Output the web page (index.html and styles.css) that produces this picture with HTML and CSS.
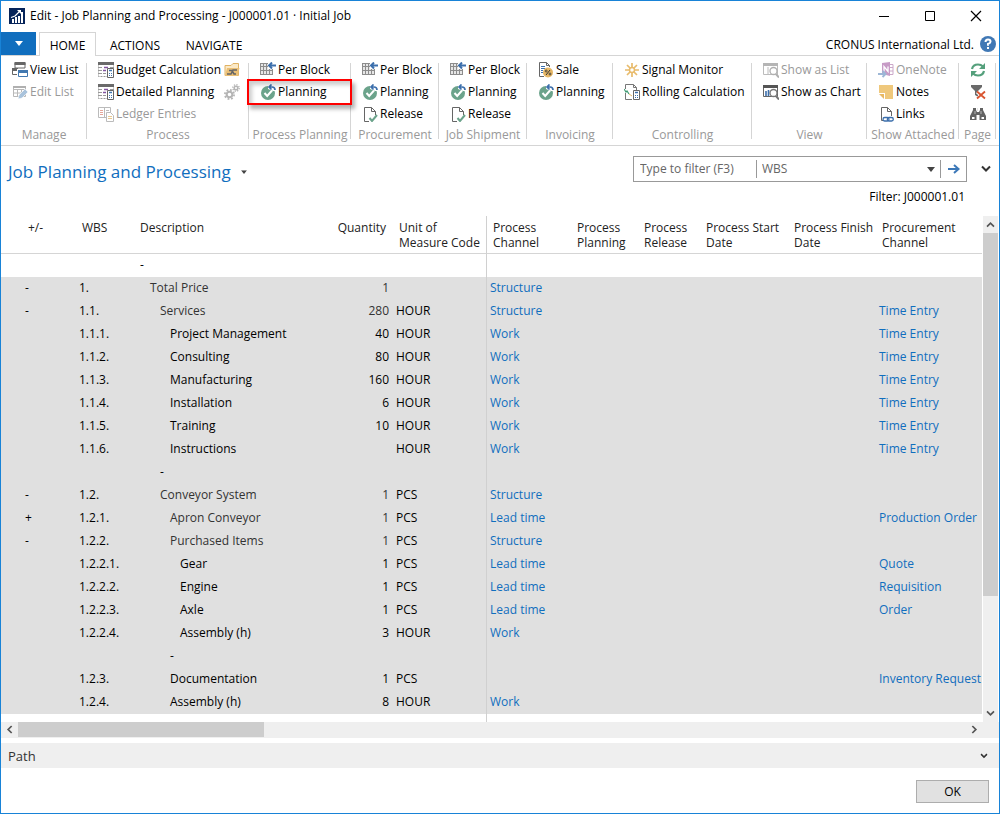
FILE: index.html
```html
<!DOCTYPE html>
<html lang="en">
<head>
<meta charset="utf-8">
<title>Edit - Job Planning and Processing</title>
<link rel="stylesheet" href="styles.css">
</head>
<body>
<svg class="defs" aria-hidden="true">
  <symbol id="i-viewlist" viewBox="0 0 16 16"><path d="M3 1h10v5H3z" fill="#fff" stroke="#666"/><path d="M2.500 0h11v3h-11z" fill="#666"/><path d="M.5 7.500h6v5h-6z" fill="#fff" stroke="#666"/><path d="M0 6h6v3H0z" fill="#666"/><path d="M5 7h11v9H5z" fill="#fff"/><path d="M6.500 9.500h9v5h-9z" fill="#fff" stroke="#4278b0"/><path d="M6 8h10v3H6z" fill="#4278b0"/></symbol>
  <symbol id="i-editlist" viewBox="0 0 16 16"><path d="M1.500 2.500h12v10h-12zM1.500 5.500h12M1.500 9h12M5.500 5v8M9.500 5v8" fill="none" stroke="#b8b8b8"/><path d="M1 2h13v2H1z" fill="#b0b0b0"/><path d="M6 15l1-4 6-6 3 3-6 6z" fill="#a9c3dc" stroke="#fff" stroke-width=".6"/></symbol>
  <symbol id="i-calc" viewBox="0 0 16 16"><path d="M.5 1.500h15v13H.5z" fill="#fff" stroke="#999" stroke-dasharray="2 1"/><path d="M0 0h16v3H0z" fill="#6a6a6a"/><path d="M1 5.500h3M1 8.500h3M1 11.500h3" stroke="#999"/><path d="M6 5.500h4M5 8.500h3" stroke="#8254a0" stroke-width="1.500"/><path d="M12 5.500h3M5 11.500h3" stroke="#999"/><path d="M9.500 6.500h6v9h-6z" fill="#fff" stroke="#666"/><path d="M11 8.500h3" stroke="#4278b0" stroke-width="1.500"/><path d="M11 11.500h3M11 13.500h3" stroke="#4278b0" stroke-dasharray="1 1"/></symbol>
  <symbol id="i-ledger" viewBox="0 0 16 16"><path d="M.5 1.500h12v10H.5zM6.500 1.500v10" fill="#fff" stroke="#bbb"/><path d="M2 4.500h3M2 6.500h3M2 8.500h3" stroke="#e5a69a"/><path d="M8 4.500h3" stroke="#bbb"/><path d="M8.500 6.500h4l3 3v6h-7z" fill="#fff" stroke="#bbb"/><path d="M10 10.500h4M10 12.500h4" stroke="#e9c98f"/></symbol>
  <symbol id="i-folder" viewBox="0 0 16 16"><path d="M1 13.500v-10h6l2-2h5.500v12z" fill="#fbe9c6" stroke="#e0b263"/><path d="M1 14l2-8h12.500l-2 8z" fill="#eabf75"/><path d="M3 12h4l2-4h4M5 8.500h3l2 3.500h2" fill="none" stroke="#666" stroke-width="1.600"/></symbol>
  <symbol id="i-gears" viewBox="0 0 16 16"><g fill="none" stroke="#b5b5b5"><circle cx="5.500" cy="10.500" r="2.800" stroke-width="2"/><circle cx="5.500" cy="10.500" r="4.600" stroke-width="1.800" stroke-dasharray="1.800 1.810"/><circle cx="12" cy="4" r="1.800" stroke-width="1.500"/><circle cx="12" cy="4" r="3.200" stroke-width="1.400" stroke-dasharray="1.250 1.260"/></g></symbol>
  <symbol id="i-block" viewBox="0 0 16 16"><path d="M.5 1.500h12v11H.5z" fill="#e6e6e6"/><path d="M.5 1v12M3.500 1v12M6.500 1v12M9.500 1v12M12.500 1v12M0 1.500h13M0 4.500h13M0 8.500h13M0 12.500h13" stroke="#8c8c8c"/><path d="M8 0h8v7H8z" fill="#fff"/><path d="M9 3.500h7M12 .5l-3 3 3 3" fill="none" stroke="#3c6fac" stroke-width="2"/></symbol>
  <symbol id="i-plan" viewBox="0 0 16 16"><circle cx="8" cy="9" r="7" fill="#6ba38b"/><path d="M4.500 9l2.700 3L12 6.500" fill="none" stroke="#fff" stroke-width="2"/><path d="M8 0h8v7h-3L8 5z" fill="#fff"/><path d="M9 3h3q3 0 3 3M11.500.5L9 3l2.500 2.500" fill="none" stroke="#3c6fac" stroke-width="1.700"/></symbol>
  <symbol id="i-release" viewBox="0 0 16 16"><path d="M7 15.500H2.500V1.500h7l4 4V9M9.500 1.500v4h4" fill="#fff" stroke="#666"/><path d="M7.500 12l2.500 3 5-6" fill="none" stroke="#6ba38b" stroke-width="2"/></symbol>
  <symbol id="i-sale" viewBox="0 0 16 16"><path d="M6 14.500H1.500V.5h7l3 3V5M8.500.5v3h3" fill="#fff" stroke="#666"/><path d="M3 4.500h4M3 6.500h4M3 8.500h2M3 10.500h2" stroke="#3c6fac"/><circle cx="10" cy="10.500" r="5" fill="#e6b766"/><path d="M8 13l4-5" stroke="#333"/><circle cx="8.200" cy="9" r="1" fill="none" stroke="#333" stroke-width=".8"/><circle cx="12" cy="12" r="1" fill="none" stroke="#333" stroke-width=".8"/></symbol>
  <symbol id="i-signal" viewBox="0 0 16 16"><circle cx="8" cy="8" r="2.500" fill="none" stroke="#e8bb6c" stroke-width="1.500"/><path d="M8 1v4M8 11v4M1 8h4M11 8h4M3 3l3 3M10 10l3 3M13 3l-3 3M6 10l-3 3" stroke="#e8bb6c" stroke-width="1.700"/></symbol>
  <symbol id="i-rolling" viewBox="0 0 16 16"><path d="M1.500 5V.5h8l3 3V6M9.500.5v3h3M1.500 9v6.500H8" fill="none" stroke="#777"/><path d="M0 5l2 3 1-1 2 3" fill="none" stroke="#3f9a72" stroke-width="1.200"/><path d="M5 10l3 2" stroke="#e6b766"/><path d="M9.500 6.500h6v9h-6z" fill="#fff" stroke="#666"/><path d="M11 8.500h3" stroke="#3c6fac" stroke-width="1.500"/><path d="M11 11.500h3M11 13.500h3" stroke="#3c6fac" stroke-dasharray="1 1"/></symbol>
  <symbol id="i-showlist" viewBox="0 0 16 16"><path d="M.5 2.500h14v10H.5zM5 5v8" fill="none" stroke="#bcbcbc"/><path d="M0 1h15v3H0z" fill="#b5b5b5"/><circle cx="10.500" cy="9" r="3.500" fill="#fff" stroke="#b0b0b0" stroke-width="1.300"/><path d="M13 12l3 3.500" stroke="#b0b0b0" stroke-width="2"/></symbol>
  <symbol id="i-showchart" viewBox="0 0 16 16"><path d="M.5 2.500h14v10H.5z" fill="#fff" stroke="#666"/><path d="M0 1h15v3H0z" fill="#555"/><path d="M3 7v5M5.500 6v6" stroke="#3c6fac" stroke-width="1.600"/><circle cx="10.500" cy="9" r="3.500" fill="#fff" stroke="#777" stroke-width="1.300"/><path d="M13 12l3 3.500" stroke="#777" stroke-width="2"/></symbol>
  <symbol id="i-onenote" viewBox="0 0 16 16"><path d="M11 2.500h4v10h-4M12 5.500h3M12 9h3" fill="#fff" stroke="#cba8c9"/><path d="M4 1l8-1v14l-8-2z" fill="#c79bc6"/><path d="M6 9.500v-5l4 5v-5" fill="none" stroke="#fff" stroke-width="1.300"/><path d="M0 12h7M4.500 9l3 3-3 3" fill="none" stroke="#9db7d6" stroke-width="2"/></symbol>
  <symbol id="i-notes" viewBox="0 0 16 16"><path d="M1 1h14v14H7V9H1z" fill="#efc87c"/><path d="M1 10h5v5z" fill="#e9b862"/></symbol>
  <symbol id="i-links" viewBox="0 0 16 16"><path d="M5 14.500H3.500V1.500h6l4 4V10M9.500 1.500v4h4" fill="none" stroke="#666"/><rect x="5" y="11.500" width="6" height="3.500" rx="1.700" fill="#fff" stroke="#3c6fac" stroke-width="1.300"/><rect x="9.300" y="11.500" width="6" height="3.500" rx="1.700" fill="none" stroke="#3c6fac" stroke-width="1.300"/></symbol>
  <symbol id="i-refresh" viewBox="0 0 16 16"><path d="M2 7q1-4.500 6-4.500 3 0 5 2M14 9q-1 4.500-6 4.500-3 0-5-2" fill="none" stroke="#55a07c" stroke-width="2.200"/><path d="M15 1v6H9zM1 15V9h6z" fill="#55a07c"/></symbol>
  <symbol id="i-clearfilter" viewBox="0 0 16 16"><path d="M1 1h11v2L8 7v6l-3-2V7L1 3z" fill="#6a6a6a"/><path d="M7 8l8 7M15 8l-8 7" stroke="#fff" stroke-width="3"/><path d="M7 7.500l8 7M15 7.500l-8 7" stroke="#d9542f" stroke-width="1.800"/></symbol>
  <symbol id="i-find" viewBox="0 0 16 16"><path d="M3 2h3v2l1 2h2l1-2V2h3v2l3 6v4H9.500V9h-3v5H0v-4l3-6z" fill="#636363"/><path d="M2 11h2.500v2H2zM11.500 11H14v2h-2.500z" fill="#fff"/><path d="M7.500 2v3M5 5v3M11 5v3" stroke="#ddd" stroke-width=".7"/></symbol>
  <symbol id="i-down" viewBox="0 0 10 8"><path d="M1 1.500l4 4 4-4" fill="none" stroke="currentColor" stroke-width="2"/></symbol>
  <symbol id="i-tri" viewBox="0 0 8 5"><path d="M0 0h8L4 5z" fill="currentColor"/></symbol>
</svg>

<div class="window">
  <header class="titlebar">
    <svg class="app-icon" viewBox="0 0 16 16" aria-hidden="true"><path d="M0 0h16v16H0z" fill="#06245a"/><path d="M4 15v-4M7 15V9M10 15V8M13 15V4" stroke="#fff" stroke-width="2"/><path d="M2 9.500l4-1.500 5-5" fill="none" stroke="#fff" stroke-width="1.200"/><path d="M8 2h4v4z" fill="#fff"/></svg>
    <h1 class="window-title">Edit - Job Planning and Processing - J000001.01 · Initial Job</h1>
    <div class="window-controls">
      <button type="button" aria-label="Minimize"><svg viewBox="0 0 12 12"><path d="M1 6.500h10" stroke="#000"/></svg></button>
      <button type="button" aria-label="Maximize"><svg viewBox="0 0 12 12"><path d="M1.500 1.500h9v9h-9z" fill="none" stroke="#000"/></svg></button>
      <button type="button" aria-label="Close"><svg viewBox="0 0 12 12"><path d="M1 1l10 10M11 1L1 11" stroke="#000" stroke-width="1.200"/></svg></button>
    </div>
  </header>

  <nav class="tabs">
    <button type="button" class="file-menu" aria-label="Application menu"><svg viewBox="0 0 8 5"><use href="#i-tri"/></svg></button>
    <button type="button" class="tab tab-active">HOME</button>
    <button type="button" class="tab">ACTIONS</button>
    <button type="button" class="tab">NAVIGATE</button>
    <span class="company">CRONUS International Ltd.</span>
    <button type="button" class="help" aria-label="Help"><svg viewBox="0 0 16 16"><circle cx="8" cy="8" r="8" fill="#4078b5"/><path d="M5.500 6q0-2.500 2.500-2.500t2.500 2.300Q10.500 7.200 8 8v1.800" fill="none" stroke="#fff" stroke-width="2"/><path d="M7 11h2v2H7z" fill="#fff"/></svg></button>
  </nav>

  <div class="ribbon">
    <section class="group">
      <div class="cmds">
        <button type="button" class="cmd"><svg><use href="#i-viewlist"/></svg>View List</button>
        <button type="button" class="cmd" disabled><svg><use href="#i-editlist"/></svg>Edit List</button>
      </div>
      <h2>Manage</h2>
    </section>
    <section class="group">
      <div class="cmds">
        <div class="cmd-row"><button type="button" class="cmd"><svg><use href="#i-calc"/></svg>Budget Calculation</button><button type="button" class="cmd extra" aria-label="Open folder"><svg><use href="#i-folder"/></svg></button></div>
        <div class="cmd-row"><button type="button" class="cmd"><svg><use href="#i-calc"/></svg>Detailed Planning</button><button type="button" class="cmd extra" aria-label="Settings" disabled><svg><use href="#i-gears"/></svg></button></div>
        <button type="button" class="cmd" disabled><svg><use href="#i-ledger"/></svg>Ledger Entries</button>
      </div>
      <h2>Process</h2>
    </section>
    <section class="group">
      <div class="cmds">
        <button type="button" class="cmd"><svg><use href="#i-block"/></svg>Per Block</button>
        <button type="button" class="cmd marked"><svg><use href="#i-plan"/></svg>Planning</button>
      </div>
      <h2>Process Planning</h2>
    </section>
    <section class="group">
      <div class="cmds">
        <button type="button" class="cmd"><svg><use href="#i-block"/></svg>Per Block</button>
        <button type="button" class="cmd"><svg><use href="#i-plan"/></svg>Planning</button>
        <button type="button" class="cmd"><svg><use href="#i-release"/></svg>Release</button>
      </div>
      <h2>Procurement</h2>
    </section>
    <section class="group">
      <div class="cmds">
        <button type="button" class="cmd"><svg><use href="#i-block"/></svg>Per Block</button>
        <button type="button" class="cmd"><svg><use href="#i-plan"/></svg>Planning</button>
        <button type="button" class="cmd"><svg><use href="#i-release"/></svg>Release</button>
      </div>
      <h2>Job Shipment</h2>
    </section>
    <section class="group">
      <div class="cmds">
        <button type="button" class="cmd"><svg><use href="#i-sale"/></svg>Sale</button>
        <button type="button" class="cmd"><svg><use href="#i-plan"/></svg>Planning</button>
      </div>
      <h2>Invoicing</h2>
    </section>
    <section class="group">
      <div class="cmds">
        <button type="button" class="cmd"><svg><use href="#i-signal"/></svg>Signal Monitor</button>
        <button type="button" class="cmd"><svg><use href="#i-rolling"/></svg>Rolling Calculation</button>
      </div>
      <h2>Controlling</h2>
    </section>
    <section class="group">
      <div class="cmds">
        <button type="button" class="cmd" disabled><svg><use href="#i-showlist"/></svg>Show as List</button>
        <button type="button" class="cmd"><svg><use href="#i-showchart"/></svg>Show as Chart</button>
      </div>
      <h2>View</h2>
    </section>
    <section class="group">
      <div class="cmds">
        <button type="button" class="cmd" disabled><svg><use href="#i-onenote"/></svg>OneNote</button>
        <button type="button" class="cmd"><svg><use href="#i-notes"/></svg>Notes</button>
        <button type="button" class="cmd"><svg><use href="#i-links"/></svg>Links</button>
      </div>
      <h2>Show Attached</h2>
    </section>
    <section class="group">
      <div class="cmds">
        <button type="button" class="cmd" aria-label="Refresh"><svg><use href="#i-refresh"/></svg></button>
        <button type="button" class="cmd" aria-label="Clear filter"><svg><use href="#i-clearfilter"/></svg></button>
        <button type="button" class="cmd" aria-label="Find"><svg><use href="#i-find"/></svg></button>
      </div>
      <h2>Page</h2>
    </section>
  </div>

  <div class="page-head">
    <button type="button" class="page-title">Job Planning and Processing <svg viewBox="0 0 8 5"><use href="#i-tri"/></svg></button>
    <form class="filter">
      <input type="text" placeholder="Type to filter (F3)" aria-label="Type to filter">
      <div class="field-pick">
        <select aria-label="Filter field"><option>WBS</option></select>
        <svg viewBox="0 0 8 5"><use href="#i-tri"/></svg>
      </div>
      <button type="button" aria-label="Apply filter"><svg viewBox="0 0 12 10"><path d="M0 5h10M6 1l4.500 4L6 9" fill="none" stroke="#3c78b8" stroke-width="2"/></svg></button>
    </form>
    <button type="button" class="expand" aria-label="Expand filter pane"><svg viewBox="0 0 10 8"><use href="#i-down"/></svg></button>
  </div>
  <p class="filter-note">Filter: J000001.01</p>

  <main class="grid-area">
    <table class="lines">
      <colgroup><col class="w-toggle"><col class="w-wbs"><col class="w-desc"><col class="w-qty"><col class="w-uom"><col class="w-chan"><col class="w-plan"><col class="w-rel"><col class="w-date"><col class="w-date"><col class="w-proc"></colgroup>
      <thead>
        <tr><th class="toggle">+/-</th><th>WBS</th><th>Description</th><th class="qty">Quantity</th><th class="uom">Unit of<br>Measure Code</th><th>Process<br>Channel</th><th>Process<br>Planning</th><th>Process<br>Release</th><th>Process Start<br>Date</th><th>Process Finish<br>Date</th><th>Procurement<br>Channel</th></tr>
      </thead>
      <tbody>
        <tr class="plain"><td class="toggle"></td><td></td><td class="l0">-</td><td class="qty"></td><td class="uom"></td><td></td><td></td><td></td><td></td><td></td><td></td></tr>
        <tr class="sum"><td class="toggle">-</td><td>1.</td><td class="l1">Total Price</td><td class="qty">1</td><td class="uom"></td><td><a href="#">Structure</a></td><td></td><td></td><td></td><td></td><td></td></tr>
        <tr class="sum"><td class="toggle">-</td><td>1.1.</td><td class="l2">Services</td><td class="qty">280</td><td class="uom">HOUR</td><td><a href="#">Structure</a></td><td></td><td></td><td></td><td></td><td><a href="#">Time Entry</a></td></tr>
        <tr><td class="toggle"></td><td>1.1.1.</td><td class="l3">Project Management</td><td class="qty">40</td><td class="uom">HOUR</td><td><a href="#">Work</a></td><td></td><td></td><td></td><td></td><td><a href="#">Time Entry</a></td></tr>
        <tr><td class="toggle"></td><td>1.1.2.</td><td class="l3">Consulting</td><td class="qty">80</td><td class="uom">HOUR</td><td><a href="#">Work</a></td><td></td><td></td><td></td><td></td><td><a href="#">Time Entry</a></td></tr>
        <tr><td class="toggle"></td><td>1.1.3.</td><td class="l3">Manufacturing</td><td class="qty">160</td><td class="uom">HOUR</td><td><a href="#">Work</a></td><td></td><td></td><td></td><td></td><td><a href="#">Time Entry</a></td></tr>
        <tr><td class="toggle"></td><td>1.1.4.</td><td class="l3">Installation</td><td class="qty">6</td><td class="uom">HOUR</td><td><a href="#">Work</a></td><td></td><td></td><td></td><td></td><td><a href="#">Time Entry</a></td></tr>
        <tr><td class="toggle"></td><td>1.1.5.</td><td class="l3">Training</td><td class="qty">10</td><td class="uom">HOUR</td><td><a href="#">Work</a></td><td></td><td></td><td></td><td></td><td><a href="#">Time Entry</a></td></tr>
        <tr><td class="toggle"></td><td>1.1.6.</td><td class="l3">Instructions</td><td class="qty"></td><td class="uom">HOUR</td><td><a href="#">Work</a></td><td></td><td></td><td></td><td></td><td><a href="#">Time Entry</a></td></tr>
        <tr><td class="toggle"></td><td></td><td class="l2">-</td><td class="qty"></td><td class="uom"></td><td></td><td></td><td></td><td></td><td></td><td></td></tr>
        <tr class="sum"><td class="toggle">-</td><td>1.2.</td><td class="l2">Conveyor System</td><td class="qty">1</td><td class="uom">PCS</td><td><a href="#">Structure</a></td><td></td><td></td><td></td><td></td><td></td></tr>
        <tr class="sum"><td class="toggle">+</td><td>1.2.1.</td><td class="l3">Apron Conveyor</td><td class="qty">1</td><td class="uom">PCS</td><td><a href="#">Lead time</a></td><td></td><td></td><td></td><td></td><td><a href="#">Production Order</a></td></tr>
        <tr class="sum"><td class="toggle">-</td><td>1.2.2.</td><td class="l3">Purchased Items</td><td class="qty">1</td><td class="uom">PCS</td><td><a href="#">Structure</a></td><td></td><td></td><td></td><td></td><td></td></tr>
        <tr><td class="toggle"></td><td>1.2.2.1.</td><td class="l4">Gear</td><td class="qty">1</td><td class="uom">PCS</td><td><a href="#">Lead time</a></td><td></td><td></td><td></td><td></td><td><a href="#">Quote</a></td></tr>
        <tr><td class="toggle"></td><td>1.2.2.2.</td><td class="l4">Engine</td><td class="qty">1</td><td class="uom">PCS</td><td><a href="#">Lead time</a></td><td></td><td></td><td></td><td></td><td><a href="#">Requisition</a></td></tr>
        <tr><td class="toggle"></td><td>1.2.2.3.</td><td class="l4">Axle</td><td class="qty">1</td><td class="uom">PCS</td><td><a href="#">Lead time</a></td><td></td><td></td><td></td><td></td><td><a href="#">Order</a></td></tr>
        <tr><td class="toggle"></td><td>1.2.2.4.</td><td class="l4">Assembly (h)</td><td class="qty">3</td><td class="uom">HOUR</td><td><a href="#">Work</a></td><td></td><td></td><td></td><td></td><td></td></tr>
        <tr><td class="toggle"></td><td></td><td class="l3">-</td><td class="qty"></td><td class="uom"></td><td></td><td></td><td></td><td></td><td></td><td></td></tr>
        <tr><td class="toggle"></td><td>1.2.3.</td><td class="l3">Documentation</td><td class="qty">1</td><td class="uom">PCS</td><td></td><td></td><td></td><td></td><td></td><td><a href="#">Inventory Request</a></td></tr>
        <tr><td class="toggle"></td><td>1.2.4.</td><td class="l3">Assembly (h)</td><td class="qty">8</td><td class="uom">HOUR</td><td><a href="#">Work</a></td><td></td><td></td><td></td><td></td><td></td></tr>
      </tbody>
      <tfoot aria-hidden="true"><tr><td colspan="5" class="uom"></td><td colspan="6"></td></tr></tfoot>
    </table>
    <div class="vscroll">
      <button type="button" aria-label="Scroll up"><svg class="up" viewBox="0 0 10 8"><use href="#i-down"/></svg></button>
      <div class="track"><div class="thumb"></div></div>
      <button type="button" aria-label="Scroll down"><svg viewBox="0 0 10 8"><use href="#i-down"/></svg></button>
    </div>
    <div class="hscroll">
      <button type="button" aria-label="Scroll left"><svg class="left" viewBox="0 0 10 8"><use href="#i-down"/></svg></button>
      <div class="track"><div class="thumb"></div></div>
      <button type="button" aria-label="Scroll right"><svg class="right" viewBox="0 0 10 8"><use href="#i-down"/></svg></button>
    </div>
  </main>

  <button type="button" class="path-bar"><span>Path</span><svg viewBox="0 0 10 8"><use href="#i-down"/></svg></button>

  <footer class="actions"><button type="button" class="ok">OK</button></footer>
</div>
</body>
</html>
```
FILE: styles.css
```css
* { box-sizing: border-box; }
body {
  margin: 0;
  background: #fff;
  color: #000;
  font: 12px/16px "Open Sans", "Noto Sans", sans-serif;
}
h1, h2, p { margin: 0; font-size: 12px; font-weight: 400; }
button, input, select {
  margin: 0;
  padding: 0;
  border: 0;
  background: none;
  color: inherit;
  font: inherit;
}
svg { display: block; flex: none; }
.defs { position: absolute; width: 0; height: 0; }

.window {
  display: flex;
  flex-direction: column;
  min-height: 100vh;
  border: 1px solid #1883d7;
}

/* Title bar */
.titlebar { display: flex; align-items: center; height: 31px; padding: 0 0 2px 8px; }
.app-icon { width: 16px; height: 16px; }
.window-title { flex: 1; margin-left: 5px; }
.window-controls { display: flex; }
.window-controls button { display: flex; justify-content: center; align-items: center; width: 46px; height: 29px; }
.window-controls svg { width: 12px; height: 12px; }

/* Ribbon tabs */
.tabs {
  display: flex;
  height: 24px;
  padding-right: 3px;
  background: linear-gradient(#d5d5d5, #d5d5d5) bottom / 100% 1px no-repeat;
}
.file-menu { display: flex; justify-content: center; align-items: center; width: 35px; height: 23px; margin-right: 3px; background: #106ebe; color: #fff; }
.file-menu svg { width: 8px; height: 5px; }
.tab { width: 80px; padding-top: 2px; border: 1px solid transparent; border-bottom: 0; }
.tab-active { width: 57px; border-color: #d5d5d5; background: #fff; }
.tab-active + .tab { width: 78px; }
.company { flex: 1; padding-top: 5px; text-align: right; }
.help { width: 16px; margin-left: 6px; }
.help svg { width: 16px; height: 16px; }

/* Ribbon */
.ribbon {
  display: grid;
  grid-template-columns: 86fr 162fr 102fr 88fr 88fr 86fr 139fr 115fr 92fr 37fr;
  padding-right: 3px;
  border-bottom: 1px solid #d5d5d5;
}
.group {
  min-width: 0;
  height: 89px;
  padding-top: 3px;
  background: linear-gradient(#d5d5d5, #d5d5d5) right 7px / 1px 76px no-repeat;
}
.cmds { height: 66px; }
.cmd-row { display: flex; justify-content: space-between; padding-right: 9px; }
.cmd {
  display: flex;
  align-items: center;
  gap: 2px;
  height: 22px;
  padding-left: 11px;
  white-space: nowrap;
}
.cmd:disabled { color: #999; }
.cmd svg { width: 16px; height: 16px; }
.cmd.extra { padding-left: 0; }
.marked { position: relative; width: 100%; }
.marked::after {
  content: "";
  position: absolute;
  inset: -2px -1px -2px -2px;
  border: 2px solid #f00;
  box-shadow: 3px 4px 4px rgba(0, 0, 0, .3), inset 3px 4px 4px rgba(0, 0, 0, .2);
}
.group h2 { line-height: 20px; color: #999; text-align: center; white-space: nowrap; }

/* Page heading and quick filter */
.page-head { display: flex; align-items: center; height: 26px; margin-top: 10px; padding: 0 8px 0 7px; }
.page-title { display: flex; align-items: center; gap: 10px; margin-right: auto; padding-top: 5px; color: #106ebe; font-size: 17px; line-height: 24px; }
.page-title svg { width: 6px; height: 4px; color: #444; }
.filter { display: flex; align-items: center; width: 334px; height: 26px; border: 1px solid #999; color: #666; }
.filter input { width: 122px; height: 24px; padding: 0 0 1px 6px; outline: 0; }
.filter input::placeholder { color: #666; opacity: 1; }
.field-pick { display: flex; flex: 1; align-items: center; height: 18px; border: solid #999; border-width: 0 1px; }
.field-pick select { flex: 1; height: 18px; padding-left: 5px; appearance: none; outline: 0; }
.field-pick svg { width: 8px; height: 5px; margin-right: 5px; color: #444; }
.filter button { display: flex; justify-content: center; width: 25px; }
.filter button svg { width: 12px; height: 10px; }
.expand { margin-left: 14px; color: #333; }
.expand svg { width: 10px; height: 8px; }
.filter-note { margin: 7px 34px 11px 0; text-align: right; }

/* Lines grid */
.grid-area { display: grid; grid-template-columns: minmax(0, 1fr) 15px; column-gap: 1px; padding-right: 1px; }
.lines { width: 100%; border-collapse: separate; border-spacing: 0; table-layout: fixed; }
.w-toggle { width: 75px; }
.w-wbs { width: 58px; }
.w-desc { width: 196px; }
.w-qty { width: 63px; }
.w-uom { width: 94px; }
.w-chan { width: 84px; }
.w-plan { width: 67px; }
.w-rel { width: 62px; }
.w-date { width: 88px; }
.w-proc { width: 106px; }
.lines th { height: 38px; padding: 4px 0 0 6px; border-bottom: 1px solid #d5d5d5; color: #222; font-weight: 400; line-height: 15px; text-align: left; vertical-align: top; white-space: nowrap; }
.lines td { height: 23px; padding: 0 0 2px 3px; line-height: 20px; vertical-align: middle; white-space: nowrap; }
.lines tbody tr { background: #e0e0e0; }
.lines tbody .plain { background: #fff; }
.lines th.toggle { padding-left: 27px; }
.lines td.toggle { padding-left: 24px; }
.lines th.qty { padding-right: 7px; text-align: right; }
.lines td.qty { padding-right: 4px; text-align: right; }
.lines .uom { border-right: 1px solid #d0d0d0; }
.lines td.l0 { padding-left: 6px; }
.lines td.l1 { padding-left: 16px; }
.lines td.l2 { padding-left: 26px; }
.lines td.l3 { padding-left: 36px; }
.lines td.l4 { padding-left: 46px; }
.lines .sum .qty, .sum .l1, .sum .l2, .sum .l3 { color: #333; }
.lines tfoot td { height: 8px; padding: 0; line-height: 0; }
.lines a { color: #106ebe; text-decoration: none; }

/* Scroll bars */
.vscroll, .hscroll { display: flex; background: #efefef; color: #555; }
.vscroll { flex-direction: column; }
.hscroll { grid-column: 1 / -1; height: 16px; margin-right: -1px; padding-right: 16px; }
.vscroll button, .hscroll button { display: flex; justify-content: center; align-items: center; width: 15px; height: 17px; }
.hscroll button { width: 17px; height: 15px; }
.vscroll svg, .hscroll svg { width: 9px; height: 7px; }
.track { flex: 1; }
.thumb { background: #cdcdcd; }
.vscroll .thumb { height: 77%; }
.hscroll .thumb { width: 26%; height: 15px; }
.up { transform: rotate(180deg); }
.left { transform: rotate(90deg); }
.right { transform: rotate(-90deg); }

/* Path bar and footer */
.path-bar { display: flex; justify-content: space-between; align-items: center; height: 25px; margin-top: 5px; padding: 0 11px 0 7px; background: #efefef; color: #333; font-size: 13px; }
.path-bar svg { width: 8px; height: 6px; }
.actions { display: flex; justify-content: flex-end; padding: 12px 10px 10px; }
.ok { width: 73px; height: 23px; border: 1px solid #adadad; background: #e1e1e1; }
```
